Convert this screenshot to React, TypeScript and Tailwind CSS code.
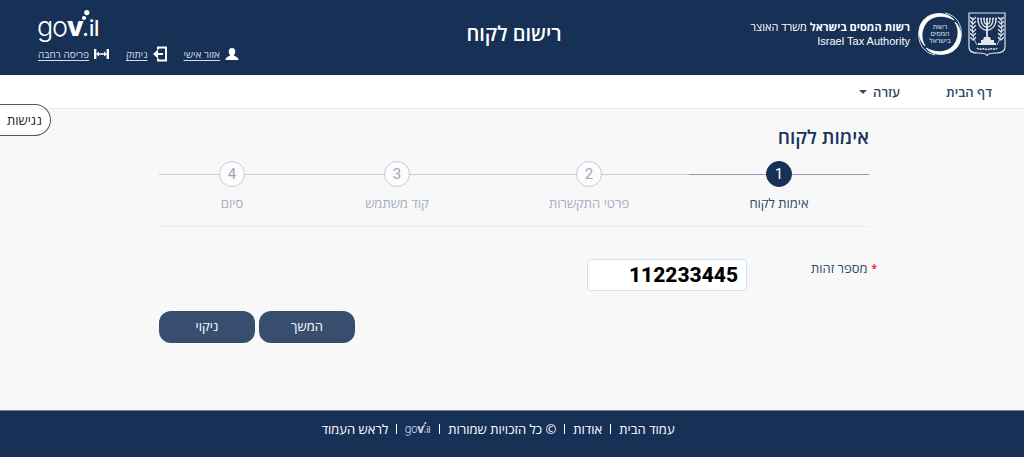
import { useState } from "react";
import type { ReactNode } from "react";

const steps = [
  { id: 1, title: "אימות לקוח" },
  { id: 2, title: "פרטי התקשרות" },
  { id: 3, title: "קוד משתמש" },
  { id: 4, title: "סיום" },
];

function GovLogo({ className }: { className: string }) {
  return (
    <svg viewBox="0 0 62 34" className={className} direction="ltr" role="img" aria-label="gov.il">
      <g fill="currentColor" fontFamily="Inter, sans-serif">
        <text x="-1" y="26" fontSize="27" fontWeight="300">g</text>
        <text x="14" y="26" fontSize="27" fontWeight="300">o</text>
        <text x="29" y="26" fontSize="27" fontWeight="800">v</text>
        <text x="51" y="26" fontSize="21" fontWeight="500">i</text>
        <text x="56" y="26" fontSize="21" fontWeight="500">l</text>
      </g>
      <g fill="currentColor">
        <circle cx="46" cy="8" r="2.1" />
        <circle cx="48.8" cy="2.6" r="2.6" />
        <circle cx="47.6" cy="24.4" r="1.7" />
      </g>
    </svg>
  );
}

function StateEmblem() {
  const leaves = [8, 12, 16, 20, 24, 28];

  return (
    <svg viewBox="0 0 38 44" className="h-11 w-[38px]" fill="none" stroke="#dfe5ee" aria-hidden="true">
      <path d="M1 1H37V35C37 40 33 41 28 41C23 41 20 41.500 19 43.500C18 41.500 15 41 10 41C5 41 1 40 1 35Z" strokeWidth="1.2" />
      {/* olive branches */}
      <path d="M5 5C3.500 14 4 25 9 33" strokeWidth="0.8" />
      <path d="M33 5C34.500 14 34 25 29 33" strokeWidth="0.8" />
      {leaves.map((y) => (
        <g key={y} strokeWidth="1.300" strokeLinecap="round">
          <path d={`M5 ${y}L2.600 ${y - 2.5}M5 ${y}L7.600 ${y - 2.5}`} />
          <path d={`M33 ${y}L30.400 ${y - 2.5}M33 ${y}L35.400 ${y - 2.5}`} />
        </g>
      ))}
      {/* menorah */}
      <path d="M10 7C10 22 28 22 28 7M13 7C13 18 25 18 25 7M16 7C16 14 22 14 22 7" strokeWidth="1.300" />
      <path d="M19 6V27" strokeWidth="1.800" />
      <path d="M9 6.500H29" strokeWidth="1.300" strokeDasharray="2 1" />
      <path d="M16 25H22L23 28H26V31H28V33H10V31H13V28H15Z" fill="#dfe5ee" stroke="none" />
      <path d="M9 36C12 39 14 35 19 38C24 35 26 39 29 36" strokeWidth="1.500" strokeDasharray="2 0.800" />
    </svg>
  );
}

function TaxLogo() {
  return (
    <svg viewBox="0 0 44 44" className="size-11" role="img" aria-label="רשות המסים בישראל">
      <path d="M7 34C-3 24 0 8 13 3C22 0 31 2 36 8C27 3 18 3 11 8C3 15 2 26 7 34Z" fill="#fff" stroke="#fff" strokeWidth="0.900" />
      <path d="M37 10C47 20 44 36 31 41C22 44 13 42 8 36C17 41 26 41 33 36C41 29 42 18 37 10Z" fill="#fff" stroke="#fff" strokeWidth="0.900" />
      <path d="M27 1C38 3 45 13 43 25M17 43C6 41 -1 31 1 19" fill="none" stroke="#fff" strokeWidth="0.800" />
      <g fill="#dfe5ee" fontSize="7" fontFamily="'Open Sans', sans-serif" fontWeight="500" textAnchor="middle">
        <text x="22" y="17">רשות</text>
        <text x="22" y="24">המסים</text>
        <text x="22" y="31">בישראל</text>
      </g>
    </svg>
  );
}

function HeaderLink({ label, children }: { label: string; children: ReactNode }) {
  return (
    <a href="#" className="flex items-center gap-[5px] whitespace-nowrap text-[10px] leading-4 text-[#d5dce7]">
      {children}
      <span className="underline underline-offset-2">{label}</span>
    </a>
  );
}

export default function App() {
  const [idNumber, setIdNumber] = useState("112233445");
  const current = 1;

  return (
    <div
      dir="rtl"
      className="relative flex min-h-screen flex-col bg-[#f8f8f8] font-['Open_Sans','Noto_Sans',sans-serif] text-[#1b3358]"
    >
      <header className="grid grid-cols-[1fr_auto_1fr] items-start bg-[#163056] px-[18px] pb-[13px] pt-2.5 text-white">
        <div className="flex items-start gap-1.5 pt-0.5">
          <StateEmblem />
          <TaxLogo />
          <div className="pr-0.5 pt-2 text-[11px] leading-[14px]">
            <p className="whitespace-nowrap">
              <b>רשות המסים בישראל</b> משרד האוצר
            </p>
            <p dir="ltr" className="text-right font-['Liberation_Sans',Arial,sans-serif]">
              Israel Tax Authority
            </p>
          </div>
        </div>

        <h1 className="pl-1 pt-2.5 text-[20px] font-semibold leading-7">רישום לקוח</h1>

        <div className="flex flex-col items-end pl-5">
          <GovLogo className="h-[34px] w-[62px] overflow-visible" />
          <div className="mt-0.5 flex gap-[17px]">
            <HeaderLink label="אזור אישי">
              <svg viewBox="0 0 14 14" className="size-3.5" fill="#fff" aria-hidden="true">
                <path d="M7 1C9.200 1 10.500 2.600 10.300 4.800C10.200 6.400 9.500 7.600 8.800 8.300C9 9.500 13.500 9.500 13.500 13H0.500C0.500 9.500 5 9.500 5.200 8.300C4.500 7.600 3.800 6.400 3.700 4.800C3.500 2.600 4.800 1 7 1Z" />
              </svg>
            </HeaderLink>
            <HeaderLink label="ניתוק">
              <svg viewBox="0 0 14 16" className="h-4 w-3.5" fill="none" stroke="#fff" strokeWidth="2" aria-hidden="true">
                <path d="M5 3.500V1.500H13V14.500H5V12.500M3 8H10" />
                <path d="M0 8L5 3.500V12.500Z" fill="#fff" stroke="none" />
              </svg>
            </HeaderLink>
            <HeaderLink label="פריסה רחבה">
              <svg viewBox="0 0 15 12" className="h-3 w-[15px]" fill="none" stroke="#fff" aria-hidden="true">
                <path d="M1.200 1V11M13.800 1V11" strokeWidth="2.400" />
                <path d="M3 6H12" strokeWidth="1.500" />
                <path d="M2 6L5 3.500V8.500ZM13 6L10 3.500V8.500Z" fill="#fff" stroke="none" />
              </svg>
            </HeaderLink>
          </div>
        </div>
      </header>

      <nav className="flex items-center gap-[46px] border-b border-[#e9ecef] bg-white px-8 pb-1.5 pt-[7px] text-[13px] font-semibold leading-5 text-[#33486b]">
        <a href="#">דף הבית</a>
        <button type="button" className="flex items-center gap-1.5">
          עזרה
          <svg viewBox="0 0 8 4" className="h-1 w-2" fill="currentColor" aria-hidden="true">
            <path d="M0 0H8L4 4Z" />
          </svg>
        </button>
      </nav>

      <button
        type="button"
        className="absolute left-0 top-[104px] rounded-r-2xl border border-l-0 border-[#555] bg-white py-1 pl-[7px] pr-2 text-[13px] leading-[22px] text-[#222]"
      >
        נגישות
      </button>

      <main className="grow pl-1">
        <div className="mx-auto w-full max-w-[710px] pb-8 pt-3.5">
          <h2 className="text-[19px] font-semibold leading-7">אימות לקוח</h2>

          <ol className="mt-2.5 grid grid-cols-[180fr_200fr_184fr_146fr] border-b border-[#e8eaed] pb-[13px]">
            {steps.map((step) => {
              const active = step.id === current;
              return (
                <li
                  key={step.id}
                  className={`flex flex-col items-center text-[13px] leading-5 ${active ? "text-[#33486b]" : "text-[#a3aebf]"}`}
                >
                  <div className="flex w-full items-center">
                    <span className={`h-px grow ${active ? "bg-[#8e9bb0]" : "bg-[#c5cdd9]"}`} />
                    <span
                      className={`flex size-[26px] items-center justify-center rounded-full border font-[Roboto,sans-serif] text-[15px] ${
                        active ? "border-[#163056] bg-[#163056] text-white" : "border-[#c5cdd9] bg-[#fcfcfc] text-[#9ba7b9]"
                      }`}
                    >
                      {step.id}
                    </span>
                    <span className={`h-px grow ${active ? "bg-[#8e9bb0]" : "bg-[#c5cdd9]"}`} />
                  </div>
                  <span className="mt-1.5">{step.title}</span>
                </li>
              );
            })}
          </ol>

          <form onSubmit={(e) => e.preventDefault()}>
            <div className="mt-8 flex items-start">
              <label htmlFor="id-number" className="-mr-2 flex w-[130px] gap-1 text-[13px] leading-[18px] text-[#33486b]">
                <span className="text-[10px] font-bold text-red-500">*</span>
                מספר זהות
              </label>
              <input
                id="id-number"
                type="text"
                dir="ltr"
                inputMode="numeric"
                value={idNumber}
                onChange={(e) => setIdNumber(e.target.value)}
                className="h-8 w-40 rounded border border-[#cfe2f7] bg-white px-2 text-right font-[Roboto,sans-serif] text-[21px] font-extrabold text-black outline-none"
              />
            </div>

            <div className="mt-5 flex justify-end gap-1 text-[13px] leading-[22px] text-white">
              <button type="submit" className="w-24 rounded-xl bg-[#384e6f] pb-1.5 pt-1">
                המשך
              </button>
              <button type="reset" onClick={() => setIdNumber("")} className="w-24 rounded-xl bg-[#384e6f] pb-1.5 pt-1">
                ניקוי
              </button>
            </div>
          </form>
        </div>
      </main>

      <footer className="flex items-center justify-center gap-2 border-t border-[#6f83a0] bg-[#163056] pb-[18px] pl-0 pr-7 pt-2 text-[13px] leading-5 text-white">
        <a href="#">עמוד הבית</a>
        <span className="h-2.5 w-px bg-white" />
        <a href="#">אודות</a>
        <span className="h-2.5 w-px bg-white" />
        <span>© כל הזכויות שמורות</span>
        <span className="h-2.5 w-px bg-white" />
        <a href="#" aria-label="gov.il">
          <GovLogo className="h-3.5 w-[26px] overflow-visible text-[#c9d2e0]" />
        </a>
        <span className="h-2.5 w-px bg-white" />
        <a href="#">לראש העמוד</a>
      </footer>
    </div>
  );
}
